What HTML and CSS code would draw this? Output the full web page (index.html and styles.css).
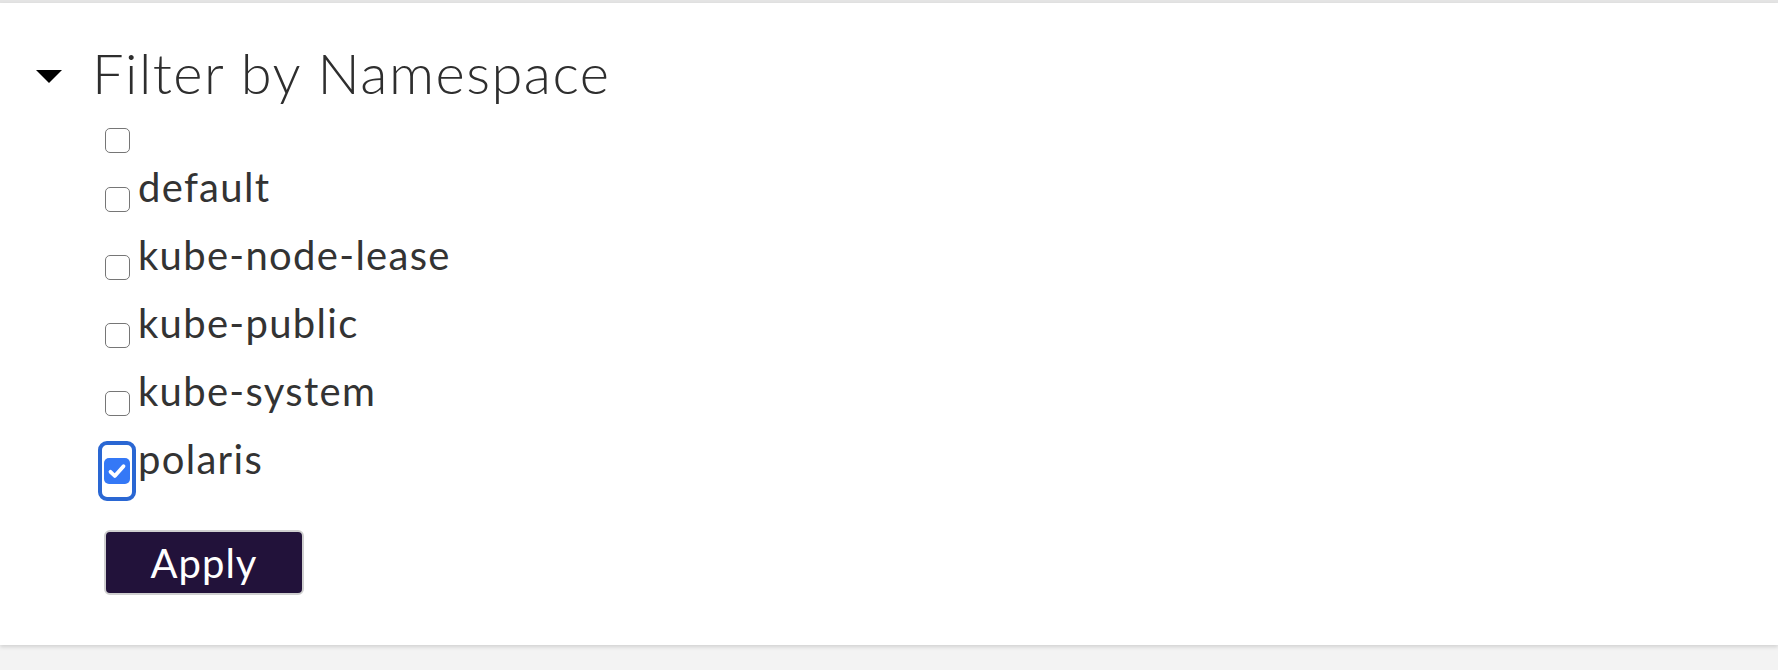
FILE: index.html
```html
<!DOCTYPE html>
<html lang="en">
<head>
<meta charset="utf-8">
<title>Filter by Namespace</title>
<link rel="stylesheet" href="styles.css">
</head>
<body>
<div class="topbar"></div>
<section class="card">
  <div class="filter-head">
    <span class="caret"></span>
    <h2 class="filter-title">Filter by Namespace</h2>
  </div>
  <form class="ns-list">
    <label class="ns-row ns-row-empty"><span class="cb"><span class="box"></span></span><span class="ns-name"></span></label>
    <label class="ns-row"><span class="cb"><span class="box"></span></span><span class="ns-name">default</span></label>
    <label class="ns-row"><span class="cb"><span class="box"></span></span><span class="ns-name">kube-node-lease</span></label>
    <label class="ns-row"><span class="cb"><span class="box"></span></span><span class="ns-name">kube-public</span></label>
    <label class="ns-row"><span class="cb"><span class="box"></span></span><span class="ns-name">kube-system</span></label>
    <label class="ns-row"><span class="cb cb-focus"><span class="box box-checked"><svg viewBox="0 0 26 26" width="26" height="26"><path d="M6.5 13.8 L10.8 18 L19.5 8.2" fill="none" stroke="#fff" stroke-width="3.8" stroke-linecap="round" stroke-linejoin="round"/></svg></span></span><span class="ns-name">polaris</span></label>
    <div class="actions"><button type="button" class="apply-btn">Apply</button></div>
  </form>
</section>
</body>
</html>
```
FILE: styles.css
```css
html, body {
  margin: 0;
  padding: 0;
}
body {
  background: #f3f3f3;
  font-family: Lato, "Liberation Sans", sans-serif;
  color: #333;
  height: 670px;
  overflow: hidden;
}
.topbar {
  height: 3px;
  background: #e4e4e4;
}
.card {
  background: #fff;
  height: 642px;
  box-shadow: 0 2px 4px rgba(0, 0, 0, 0.14);
  box-sizing: border-box;
  padding-top: 40px;
}
.filter-head {
  display: flex;
  align-items: center;
  height: 60px;
  padding-left: 36px;
}
.caret {
  width: 0;
  height: 0;
  border-left: 13px solid transparent;
  border-right: 13px solid transparent;
  border-top: 13px solid #000;
  margin-top: 6px;
}
.filter-title {
  margin: 0 0 0 30px;
  font-size: 56px;
  font-weight: 300;
  line-height: 60px;
  letter-spacing: 1.5px;
  color: #2e2e2e;
}
.ns-list {
  display: flex;
  flex-direction: column;
  padding-left: 102px;
  margin: 12px 0 0;
}
.ns-row {
  display: flex;
  align-items: center;
  height: 68px;
}
.ns-row-empty {
  height: 50px;
}
.cb {
  width: 30px;
  height: 50px;
  display: flex;
  align-items: center;
  justify-content: center;
  box-sizing: border-box;
}
.cb-focus {
  height: 52px;
  outline: 4px solid #2a67d3;
  border-radius: 5px;
}
.box {
  width: 25px;
  height: 25px;
  box-sizing: border-box;
  border: 1.8px solid #767676;
  border-radius: 5px;
  background: #fff;
  display: block;
}
.box-checked {
  width: 26px;
  height: 26px;
  border: none;
  background: #3478f6;
}
.box-checked svg {
  display: block;
}
.ns-name {
  font-size: 40px;
  line-height: 50px;
  letter-spacing: 1.3px;
  margin-left: 6px;
  margin-bottom: 24px;
  color: #333;
}
.actions {
  margin-top: 25px;
}
.apply-btn {
  width: 200px;
  height: 65px;
  background: #22123a;
  color: #fff;
  border: 2px solid #cfcfcf;
  border-radius: 6px;
  font-family: Lato, "Liberation Sans", sans-serif;
  font-size: 40px;
  letter-spacing: 1px;
  padding: 0;
  margin-left: 2px;
}
```
